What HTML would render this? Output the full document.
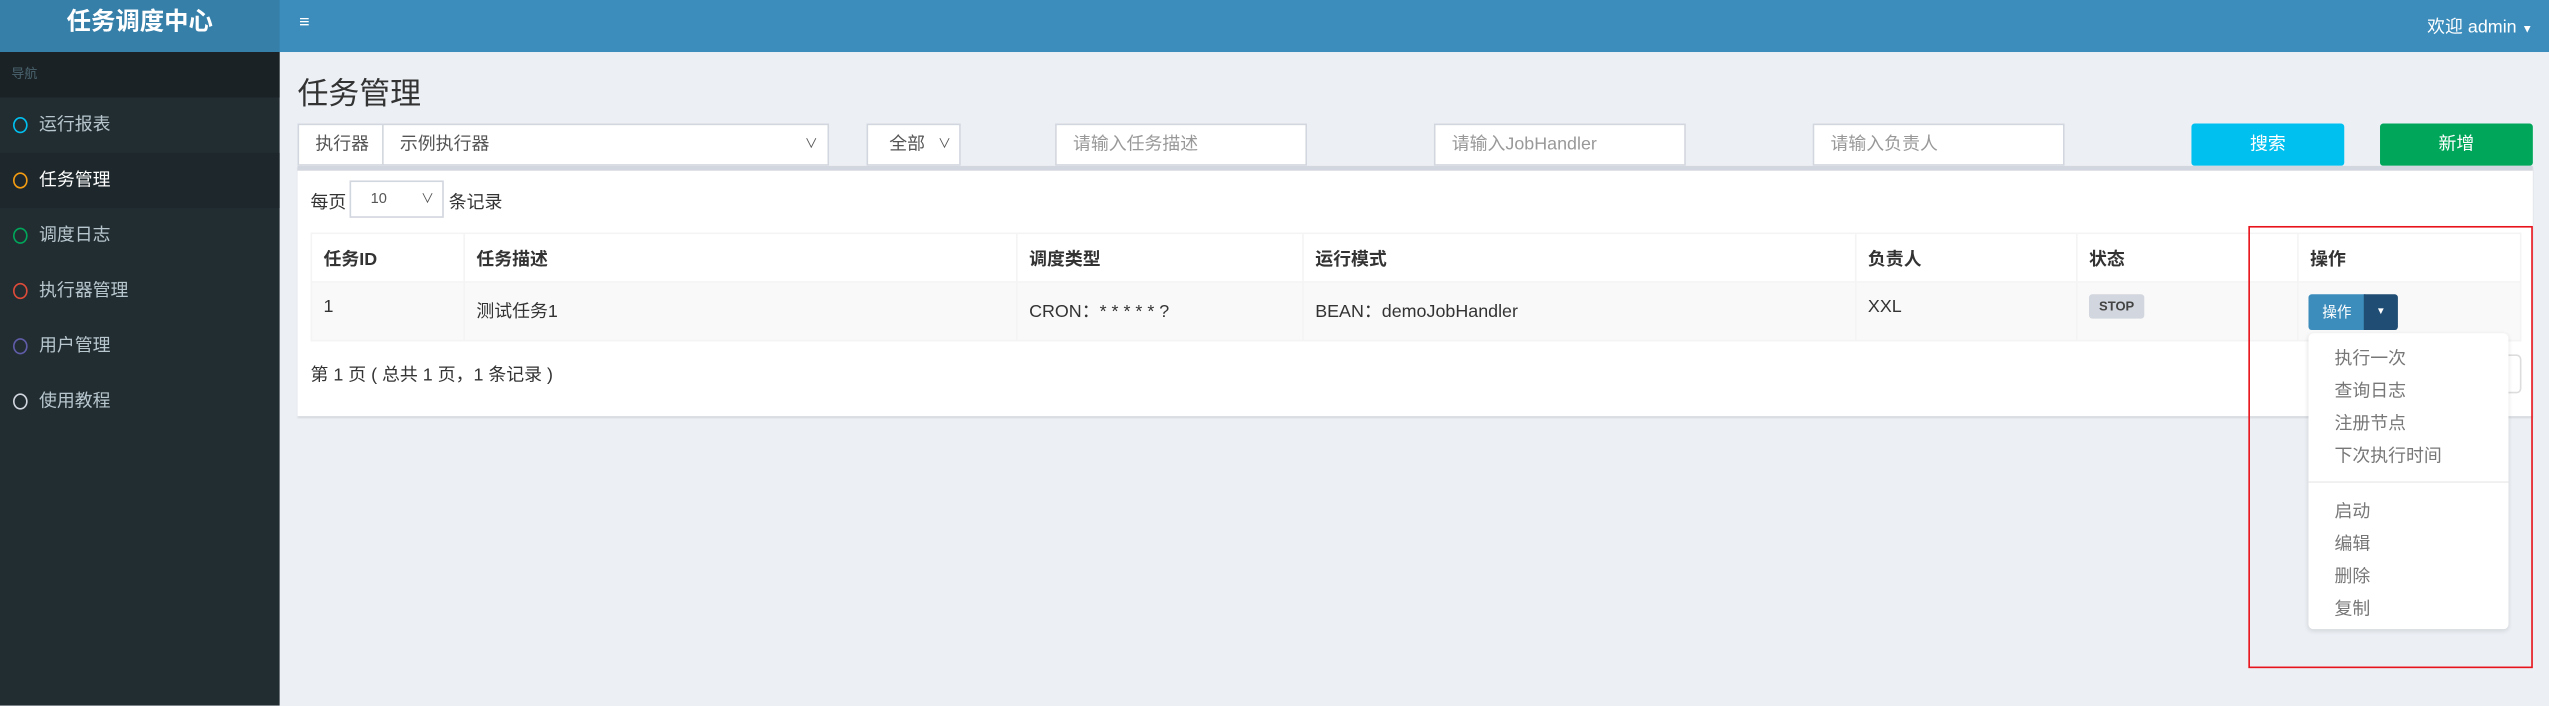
<!DOCTYPE html>
<html><head><meta charset="utf-8"><style>
*{box-sizing:border-box;margin:0;padding:0}
html,body{width:2549px;height:706px;overflow:hidden;background:#ecf0f5}
#w{position:absolute;left:0;top:0;width:1568px;height:434px;transform:scale(1.6257);transform-origin:0 0;font-family:"Liberation Sans","Noto Sans CJK SC",sans-serif;font-size:11px;color:#333;background:#ecf0f5}
.a{position:absolute}
.hdr{left:0;top:0;width:1568px;height:32px;background:#3c8dbc}
.logo{left:0;top:0;width:172px;height:32px;background:#367fa9;color:#fff;font-weight:bold;font-size:15px;text-align:center;line-height:28px}
.side{left:0;top:32px;width:172px;height:402px;background:#222d32}
.nav{left:0;top:32px;width:172px;height:28px;background:#1a2226;color:#4b646f;font-size:8px;padding-left:7px;line-height:28px}
.mi{left:0;width:172px;height:34px;color:#b8c7ce;font-size:11px;line-height:34px;padding-left:24px}
.mi i{position:absolute;left:8px;top:12px;width:9px;height:10px;border:1.6px solid;border-radius:50%}
.mi.act{background:#1e282c;color:#fff}
.inp{background:#fff;border:1px solid #d2d6de;height:26px;color:#999;font-size:11px;line-height:24px;padding-left:10px}
.btn{color:#fff;font-size:11px;text-align:center;line-height:26px;height:26px;border-radius:2px}
th,td{text-align:left;padding:0 7px;border:1px solid #f4f4f4}
.dd{color:#777;font-size:11px;left:1436px}
</style></head><body><div id="w">
<div class="a hdr"></div>
<div class="a logo">任务调度中心</div>
<div class="a" style="left:184px;top:8px;color:#fff;font-size:11px;font-weight:bold">≡</div>
<div class="a" style="left:1493px;top:8px;color:#fff;font-size:11px">欢迎 admin <span style="font-size:7px">▼</span></div>
<div class="a side"></div>
<div class="a nav">导航</div>
<div class="a mi" style="top:60px"><i style="border-color:#00c0ef"></i>运行报表</div>
<div class="a mi act" style="top:94px"><i style="border-color:#f39c12"></i>任务管理</div>
<div class="a mi" style="top:128px"><i style="border-color:#00a65a"></i>调度日志</div>
<div class="a mi" style="top:162px"><i style="border-color:#dd4b39"></i>执行器管理</div>
<div class="a mi" style="top:196px"><i style="border-color:#605ca8"></i>用户管理</div>
<div class="a mi" style="top:230px"><i style="border-color:#d2d6de"></i>使用教程</div>

<div class="a" style="left:183px;top:43px;font-size:19px;color:#333">任务管理</div>

<div class="a inp" style="left:183px;top:76px;width:53px;color:#555;padding-left:10px">执行器</div>
<div class="a inp" style="left:235px;top:76px;width:275px;color:#555">示例执行器<span style="position:absolute;right:6px;font-size:8px">∨</span></div>
<div class="a inp" style="left:533px;top:76px;width:58px;color:#555;padding-left:13px">全部<span style="position:absolute;right:5px;font-size:8px">∨</span></div>
<div class="a inp" style="left:649px;top:76px;width:155px">请输入任务描述</div>
<div class="a inp" style="left:882px;top:76px;width:155px">请输入JobHandler</div>
<div class="a inp" style="left:1115px;top:76px;width:155px">请输入负责人</div>
<div class="a btn" style="left:1348px;top:76px;width:94px;background:#00c0ef">搜索</div>
<div class="a btn" style="left:1464px;top:76px;width:94px;background:#00a65a">新增</div>

<div class="a" style="left:183px;top:102px;width:1375px;height:154px;background:#fff;border-top:3px solid #d2d6de;box-shadow:0 1px 1px rgba(0,0,0,.1)"></div>
<div class="a" style="left:191px;top:116px">每页</div>
<div class="a inp" style="left:215px;top:111px;width:58px;height:23px;line-height:21px;color:#555;font-size:9px;padding-left:12px">10<span style="position:absolute;right:5px;font-size:8px">∨</span></div>
<div class="a" style="left:276px;top:116px">条记录</div>

<table class="a" style="left:191px;top:143px;width:1360px;border-collapse:collapse;font-size:11px">
<tr style="height:30px;background:#fff;font-weight:bold"><th style="width:94px">任务ID</th><th style="width:340px">任务描述</th><th style="width:176px">调度类型</th><th style="width:340px">运行模式</th><th style="width:136px">负责人</th><th style="width:136px">状态</th><th>操作</th></tr>
<tr style="height:36px;background:#f9f9f9;vertical-align:top"><td style="padding-top:9px">1</td><td style="padding-top:9px">测试任务1</td><td style="padding-top:9px">CRON：* * * * * ?</td><td style="padding-top:9px">BEAN：demoJobHandler</td><td style="padding-top:9px">XXL</td><td></td><td></td></tr>
</table>
<div class="a" style="left:1285px;top:181px;width:34px;height:15px;background:#d2d6de;border-radius:2px;font-size:8px;font-weight:bold;text-align:center;line-height:15px;color:#444">STOP</div>
<div class="a" style="left:191px;top:222px">第 1 页 ( 总共 1 页，1 条记录 )</div>
<div class="a" style="left:1515px;top:218px;width:36px;height:24px;border:1px solid #ddd;border-radius:3px;background:#fff"></div>

<div class="a" style="left:1420px;top:181px;width:35px;height:22px;background:#3c8dbc;border-radius:2px 0 0 2px;color:#fff;font-size:9px;text-align:center;line-height:22px">操作</div>
<div class="a" style="left:1454px;top:181px;width:21px;height:22px;background:#204d74;border-radius:0 2px 2px 0;color:#fff;font-size:6px;text-align:center;line-height:22px">▼</div>
<div class="a" style="left:1420px;top:205px;width:123px;height:182px;background:#fff;border-radius:3px;box-shadow:0 1px 3px rgba(0,0,0,.12)"></div>
<div class="a dd" style="top:212px">执行一次</div>
<div class="a dd" style="top:232px">查询日志</div>
<div class="a dd" style="top:252px">注册节点</div>
<div class="a dd" style="top:272px">下次执行时间</div>
<div class="a" style="left:1420px;top:296px;width:123px;height:1px;background:#eee"></div>
<div class="a dd" style="top:306px">启动</div>
<div class="a dd" style="top:326px">编辑</div>
<div class="a dd" style="top:346px">删除</div>
<div class="a dd" style="top:366px">复制</div>
<div class="a" style="left:1383px;top:139px;width:175px;height:272px;border:1.3px solid #e8141c"></div>
</div></body></html>
